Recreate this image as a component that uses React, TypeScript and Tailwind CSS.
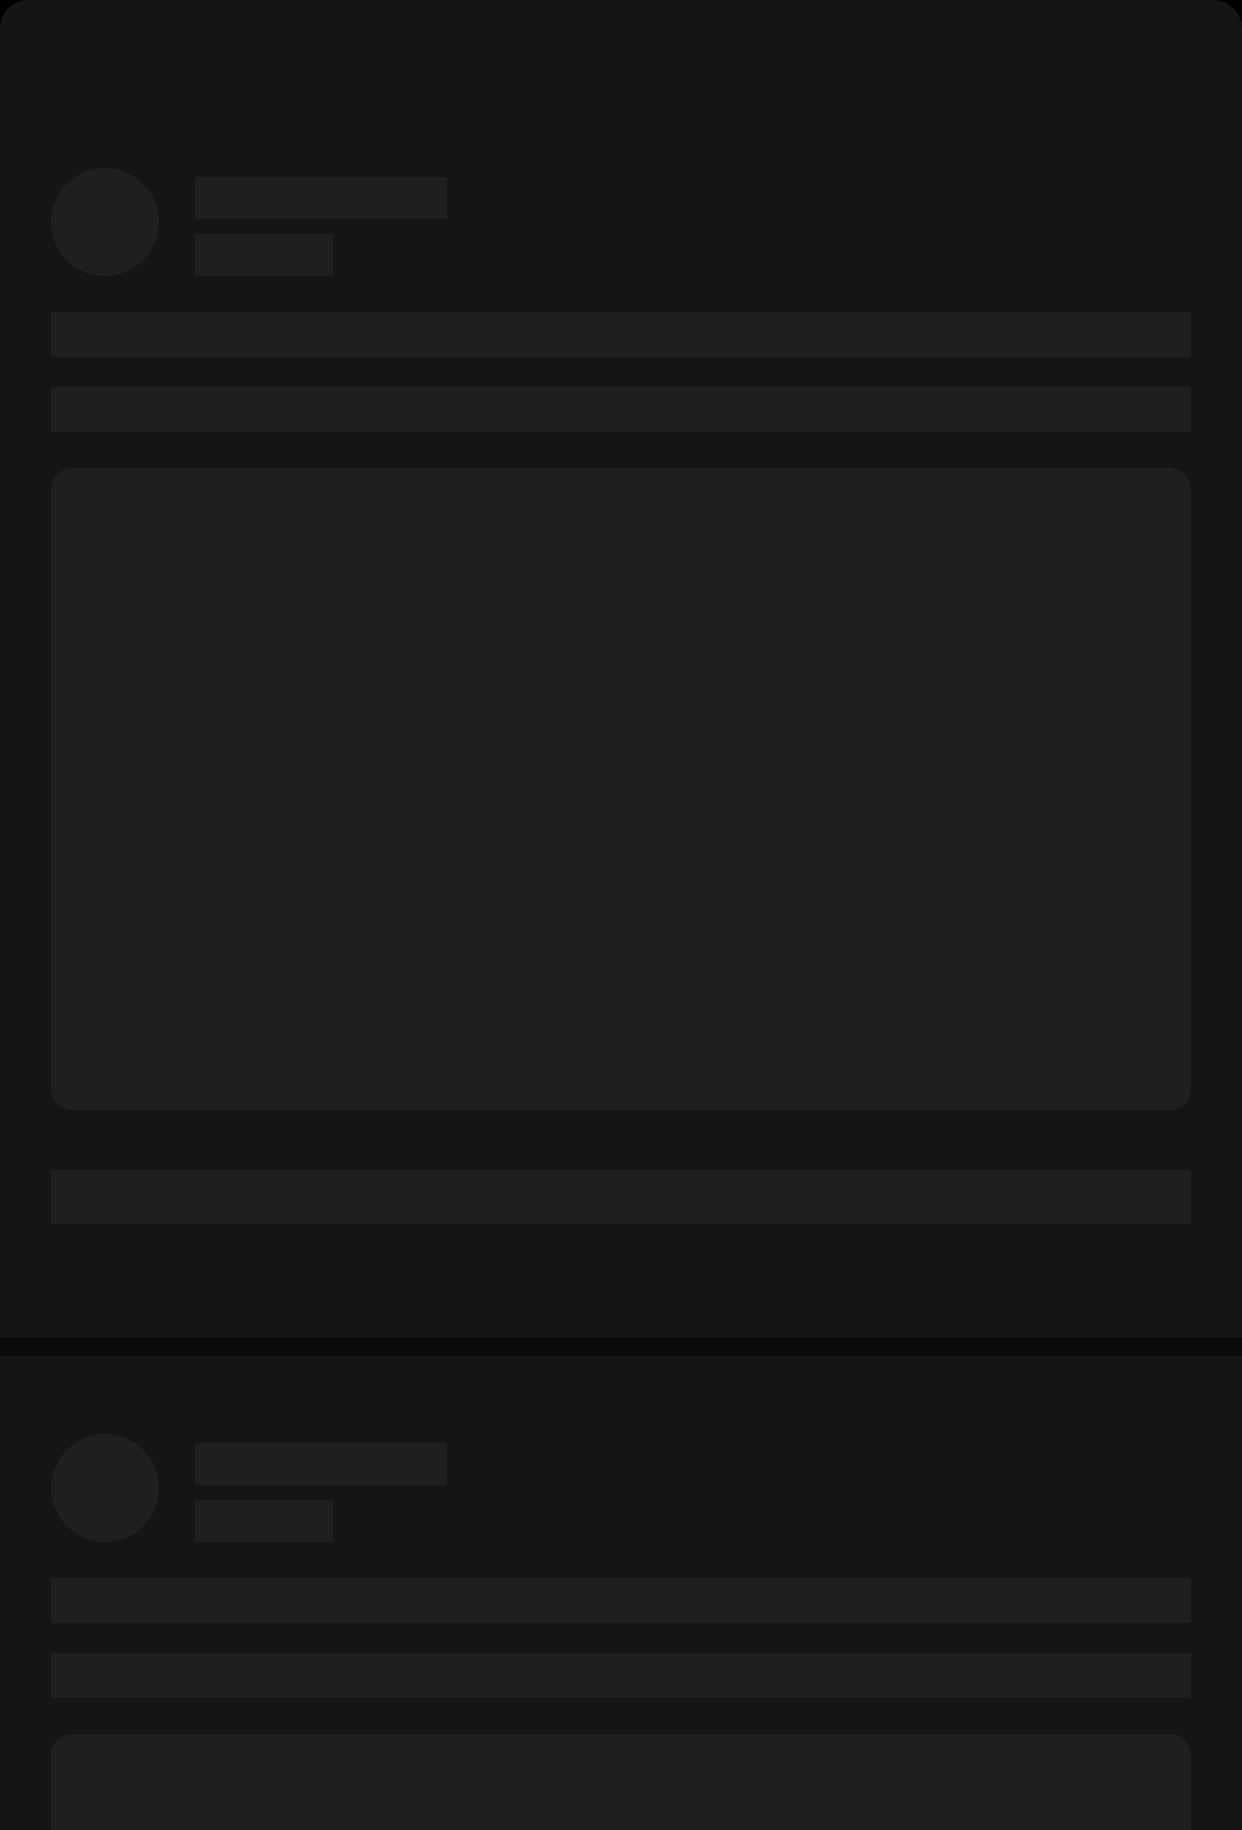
import React from 'react';

function Bar({ className }: { className: string }) {
  return <div className={`bg-[#1f1f1f] ${className}`} />;
}

function PostSkeleton({ first }: { first?: boolean }) {
  return (
    <div
      className={
        first
          ? 'bg-[#151515] rounded-t-[28px] px-[51px] pt-[168px] pb-[114px]'
          : 'bg-[#151515] px-[51px] pt-[78px] pb-[114px]'
      }
    >
      {/* Author */}
      <div className="flex items-end gap-[36px]">
        <div className="size-[108px] rounded-full bg-[#1f1f1f] shrink-0" />
        <div className="flex flex-col gap-[15px]">
          <Bar className="w-[252px] h-[42px]" />
          <Bar className="w-[138px] h-[42px]" />
        </div>
      </div>

      {/* Text lines */}
      <Bar className="mt-[36px] h-[45px] w-full" />
      <Bar className="mt-[30px] h-[45px] w-full" />

      {/* Media */}
      <div className="mt-[36px] h-[642px] w-full rounded-[21px] bg-[#1f1f1f]" />

      {/* Actions */}
      <Bar className="mt-[60px] h-[54px] w-full" />
    </div>
  );
}

export default function App() {
  return (
    <div className="w-[1242px] h-[1830px] overflow-hidden bg-black">
      <PostSkeleton first />
      <div className="h-[18px] bg-[#0a0a0a]" />
      <PostSkeleton />
    </div>
  );
}
